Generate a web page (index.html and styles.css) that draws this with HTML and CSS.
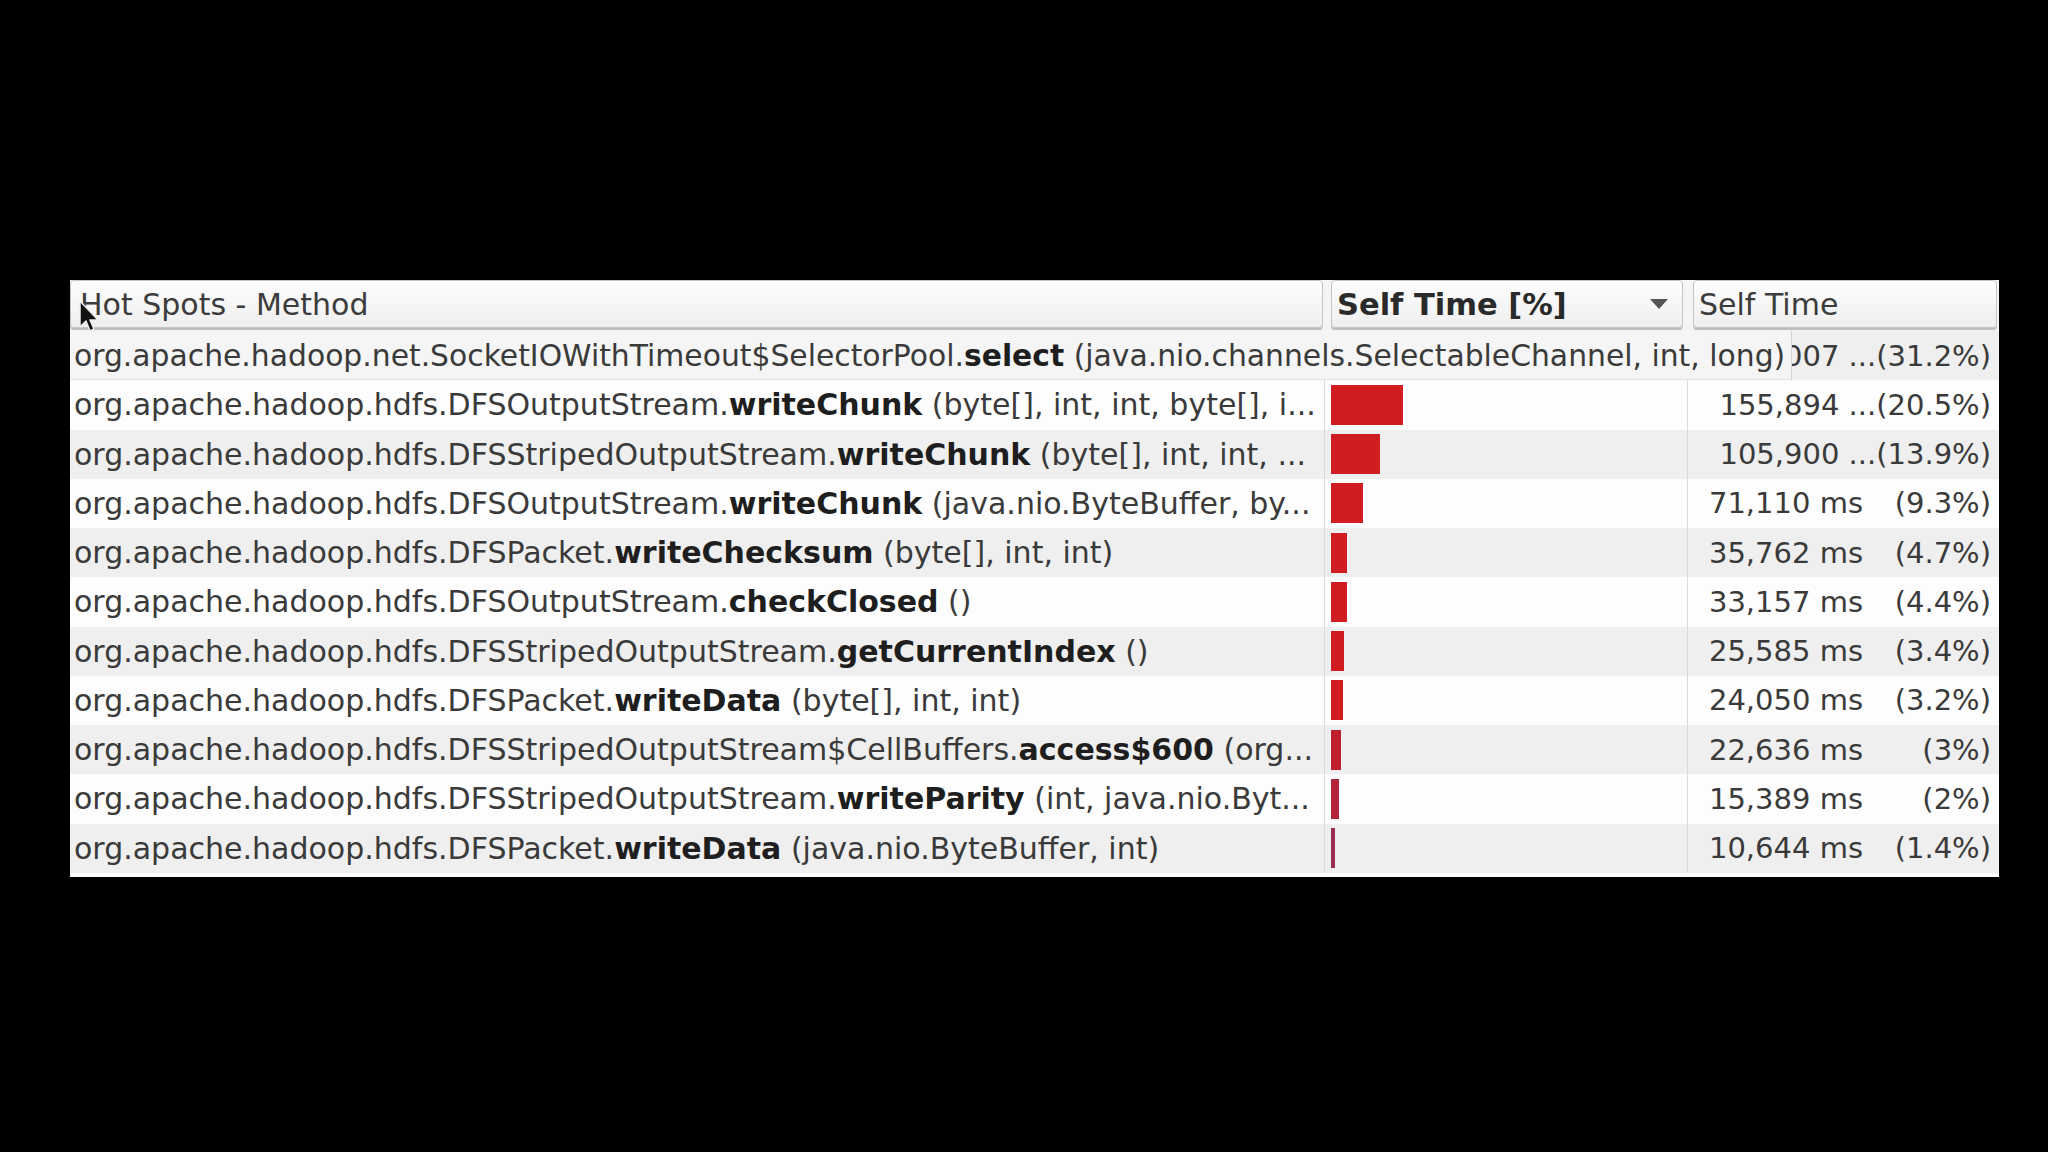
FILE: index.html
```html
<!DOCTYPE html>
<html>
<head>
<meta charset="utf-8">
<link rel="stylesheet" href="styles.css">
</head>
<body>
<div class="screen">
  <div class="table">
    <div class="head">
      <div class="hcell hmethod">Hot Spots - Method</div>
      <div class="hcell hpct"><span>Self Time [%]</span><span class="arrow"></span></div>
      <div class="hcell htime">Self Time</div>
    </div>
    <div class="rows">
      <div class="row odd">
        <div class="c-method"></div>
        <div class="c-bar"><span class="bar" style="width:110px"></span></div>
        <div class="c-time"><span class="full">237,007 ...(31.2%)</span></div>
      </div>
      <div class="row">
        <div class="c-method">org.apache.hadoop.hdfs.DFSOutputStream.<b>writeChunk</b> (byte[], int, int, byte[], i...</div>
        <div class="c-bar"><span class="bar" style="width:72px"></span></div>
        <div class="c-time"><span class="full">155,894 ...(20.5%)</span></div>
      </div>
      <div class="row odd">
        <div class="c-method">org.apache.hadoop.hdfs.DFSStripedOutputStream.<b>writeChunk</b> (byte[], int, int, ...</div>
        <div class="c-bar"><span class="bar" style="width:49px"></span></div>
        <div class="c-time"><span class="full">105,900 ...(13.9%)</span></div>
      </div>
      <div class="row">
        <div class="c-method">org.apache.hadoop.hdfs.DFSOutputStream.<b>writeChunk</b> (java.nio.ByteBuffer, by...</div>
        <div class="c-bar"><span class="bar" style="width:32px"></span></div>
        <div class="c-time"><span class="ms">71,110 ms</span><span class="pct">(9.3%)</span></div>
      </div>
      <div class="row odd">
        <div class="c-method">org.apache.hadoop.hdfs.DFSPacket.<b>writeChecksum</b> (byte[], int, int)</div>
        <div class="c-bar"><span class="bar" style="width:16px"></span></div>
        <div class="c-time"><span class="ms">35,762 ms</span><span class="pct">(4.7%)</span></div>
      </div>
      <div class="row">
        <div class="c-method">org.apache.hadoop.hdfs.DFSOutputStream.<b>checkClosed</b> ()</div>
        <div class="c-bar"><span class="bar" style="width:16px"></span></div>
        <div class="c-time"><span class="ms">33,157 ms</span><span class="pct">(4.4%)</span></div>
      </div>
      <div class="row odd">
        <div class="c-method">org.apache.hadoop.hdfs.DFSStripedOutputStream.<b>getCurrentIndex</b> ()</div>
        <div class="c-bar"><span class="bar" style="width:13px"></span></div>
        <div class="c-time"><span class="ms">25,585 ms</span><span class="pct">(3.4%)</span></div>
      </div>
      <div class="row">
        <div class="c-method">org.apache.hadoop.hdfs.DFSPacket.<b>writeData</b> (byte[], int, int)</div>
        <div class="c-bar"><span class="bar" style="width:12px"></span></div>
        <div class="c-time"><span class="ms">24,050 ms</span><span class="pct">(3.2%)</span></div>
      </div>
      <div class="row odd">
        <div class="c-method">org.apache.hadoop.hdfs.DFSStripedOutputStream$CellBuffers.<b>access$600</b> (org...</div>
        <div class="c-bar"><span class="bar dark1" style="width:10px"></span></div>
        <div class="c-time"><span class="ms">22,636 ms</span><span class="pct">(3%)</span></div>
      </div>
      <div class="row">
        <div class="c-method">org.apache.hadoop.hdfs.DFSStripedOutputStream.<b>writeParity</b> (int, java.nio.Byt...</div>
        <div class="c-bar"><span class="bar dark2" style="width:8px"></span></div>
        <div class="c-time"><span class="ms">15,389 ms</span><span class="pct">(2%)</span></div>
      </div>
      <div class="row odd">
        <div class="c-method">org.apache.hadoop.hdfs.DFSPacket.<b>writeData</b> (java.nio.ByteBuffer, int)</div>
        <div class="c-bar"><span class="bar dark3" style="width:4px"></span></div>
        <div class="c-time"><span class="ms">10,644 ms</span><span class="pct">(1.4%)</span></div>
      </div>
    </div>
    <div class="tooltip">org.apache.hadoop.net.SocketIOWithTimeout$SelectorPool.<b>select</b> (java.nio.channels.SelectableChannel, int, long)</div>
    <svg class="cursor" width="22" height="34" viewBox="0 0 22 34">
      <path d="M1 1 L1 27 L7 21 L11 31 L15 29 L11 20 L19 20 Z" fill="#111" stroke="#eee" stroke-width="1.5" stroke-linejoin="round"/>
    </svg>
  </div>
</div>
</body>
</html>
```
FILE: styles.css
```css
html, body {
  margin: 0;
  padding: 0;
  background: #000;
}
.screen {
  width: 2048px;
  height: 1152px;
  background: #000;
  padding: 280px 0 0 70px;
  box-sizing: border-box;
}
.table {
  position: relative;
  width: 1929px;
  height: 597px;
  background: #fcfcfc;
  font-family: "DejaVu Sans", sans-serif;
  font-size: 30px;
  color: #3a3a3a;
  overflow: hidden;
}
.head {
  display: grid;
  grid-template-columns: 1255px 363px 311px;
  height: 51px;
  background: #f4f4f4;
}
.hcell {
  display: flex;
  align-items: center;
  box-sizing: border-box;
  height: 48px;
  background: linear-gradient(#fdfdfd, #efefef);
  border: 1px solid #c4c4c4;
  border-radius: 4px;
  box-shadow: 0 2px 0 #bdbdbd;
  white-space: nowrap;
  overflow: hidden;
}
.hmethod {
  margin-right: 2px;
  padding-left: 9px;
  color: #3c3c3c;
}
.hpct {
  margin: 0 5px 0 6px;
  padding: 0 14px 0 5px;
  justify-content: space-between;
  font-weight: bold;
  font-size: 30.5px;
  color: #2a2a2a;
}
.htime {
  margin: 0 2px 0 5px;
  padding-left: 5px;
  color: #3c3c3c;
}
.arrow {
  width: 0;
  height: 0;
  border-left: 9px solid transparent;
  border-right: 9px solid transparent;
  border-top: 10px solid #555;
}
.row {
  display: grid;
  grid-template-columns: 1255px 363px 311px;
  height: 49.25px;
  background: #fdfdfd;
}
.row.odd {
  background: #efefef;
}
.c-method {
  display: flex;
  align-items: center;
  padding-left: 4px;
  white-space: pre;
  overflow: hidden;
  border-right: 1px solid #dadada;
}
.c-method b, .tooltip b {
  color: #1e1e1e;
}
.c-bar {
  display: flex;
  align-items: center;
  padding-left: 6px;
  border-right: 1px solid #dadada;
}
.bar {
  display: block;
  height: 40px;
  background: #cf1d22;
}
.bar.dark1 { background: #c0202e; }
.bar.dark2 { background: #b3243a; }
.bar.dark3 { background: #9a2c52; }
.c-time {
  display: flex;
  align-items: center;
  justify-content: flex-end;
  padding-right: 8px;
  white-space: nowrap;
  overflow: hidden;
  font-size: 29px;
}
.ms {
  text-align: right;
}
.pct {
  width: 128px;
  text-align: right;
}
.tooltip {
  position: absolute;
  left: 0;
  top: 51px;
  width: 1722px;
  height: 49px;
  box-sizing: border-box;
  display: flex;
  align-items: center;
  padding-left: 4px;
  background: #f5f5f5;
  border-right: 1px solid #d4d4d4;
  border-bottom: 1px solid #e2e2e2;
  white-space: pre;
  font-size: 29.8px;
  color: #3a3a3a;
}
.cursor {
  position: absolute;
  left: 9px;
  top: 20px;
}
```
